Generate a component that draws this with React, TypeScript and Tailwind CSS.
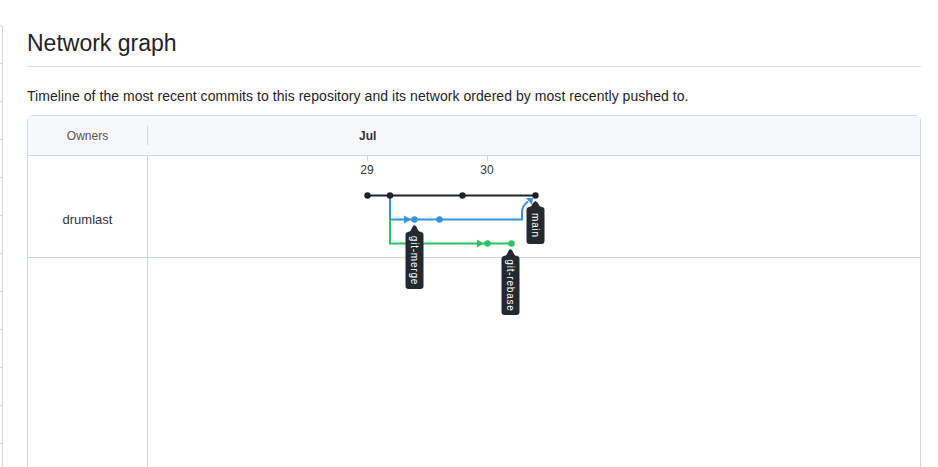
const SANS = { fontFamily: '"Liberation Sans", Arial, sans-serif' };

const SIDEBAR_ROWS = Array.from({ length: 12 });

function Label({ cx, tip, top, bottom, text }: { cx: number; tip: number; top: number; bottom: number; text: string }) {
  const l = cx - 9;
  const r = cx + 9;
  const d = `M${cx} ${tip} Q${cx + 2} ${tip + 1} ${cx + 3} ${top - 3} Q${cx + 4} ${top} ${cx + 7} ${top} H${r - 3} Q${r} ${top} ${r} ${top + 3} V${bottom - 3} Q${r} ${bottom} ${r - 3} ${bottom} H${l + 3} Q${l} ${bottom} ${l} ${bottom - 3} V${top + 3} Q${l} ${top} ${l + 3} ${top} H${cx - 7} Q${cx - 4} ${top} ${cx - 3} ${top - 3} Q${cx - 2} ${tip + 1} ${cx} ${tip} Z`;
  return (
    <g>
      <path d={d} fill="#24292f" />
      <text
        x={0}
        y={0}
        transform={`translate(${cx} ${(top + bottom) / 2}) rotate(90)`}
        textAnchor="middle"
        dominantBaseline="central"
        fill="#ffffff"
        fontSize="10"
        letterSpacing="0.8"
        fontFamily='"Liberation Sans", Arial, sans-serif'
      >
        {text}
      </text>
    </g>
  );
}

function Graph() {
  const black = '#1f2328';
  const blue = '#3b92d9';
  const green = '#2fc263';
  return (
    <svg
      className="absolute left-0 top-0"
      width={773}
      height={311}
      viewBox="148 156 773 311"
    >
      {/* day ticks */}
      <line x1={367.5} y1={156} x2={367.5} y2={161} stroke="#d0d7de" />
      <line x1={487.5} y1={156} x2={487.5} y2={161} stroke="#d0d7de" />
      <text x={367} y={174} textAnchor="middle" fontSize="12" fill="#333" fontFamily='"Liberation Sans", Arial, sans-serif'>29</text>
      <text x={487} y={174} textAnchor="middle" fontSize="12" fill="#333" fontFamily='"Liberation Sans", Arial, sans-serif'>30</text>

      {/* branches */}
      <path d="M390 195.5 V219.5 H522 V212 Q522 206 528 201.5" fill="none" stroke={blue} strokeWidth={2} />
      <path d="M526 198 L533 198 L532 205 Z" fill={blue} />
      <path d="M390 219.5 V243.5 H511" fill="none" stroke={green} strokeWidth={2} />
      <line x1={367} y1={195.5} x2={535} y2={195.5} stroke={black} strokeWidth={2} />

      {/* arrows */}
      <path d="M404 215.5 L411 219.5 L404 223.5 Z" fill={blue} />
      <path d="M477 239.5 L484 243.5 L477 247.5 Z" fill={green} />

      {/* commits */}
      {[367.5, 390, 462.5, 535.5].map((x) => (
        <circle key={x} cx={x} cy={195.5} r={3.2} fill={black} />
      ))}
      {[414.5, 439.5].map((x) => (
        <circle key={x} cx={x} cy={219.5} r={3.2} fill={blue} />
      ))}
      {[487.5, 511.5].map((x) => (
        <circle key={x} cx={x} cy={243.5} r={3.2} fill={green} />
      ))}

      <Label cx={414.5} tip={225} top={232} bottom={289} text="git-merge" />
      <Label cx={510.5} tip={249} top={256} bottom={315} text="git-rebase" />
      <Label cx={535.5} tip={201} top={207} bottom={244} text="main" />
    </svg>
  );
}

export default function App() {
  return (
    <div className="flex h-[467px] w-[938px] overflow-hidden bg-white text-[#1f2328]">
      <div className="mt-[25px] w-[3px] shrink-0 rounded-tr-md border-r border-t border-[#d0d7de]">
        {SIDEBAR_ROWS.map((_, i) => (
          <div key={i} className="h-[38px] border-b border-[#d0d7de]" />
        ))}
      </div>

      <div className="ml-[24px] w-[894px] shrink-0">
        <h2 className="mt-[28px] border-b border-[#d8dee4] pb-[8px] text-[23px] leading-[30px]" style={SANS}>
          Network graph
        </h2>
        <p className="mt-[19px] text-[14px] leading-[20px] tracking-[0.05px]" style={SANS}>
          Timeline of the most recent commits to this repository and its network ordered by most recently pushed to.
        </p>

        <div className="mt-[9px] h-[400px] rounded-t-md border border-[#d0d7de]">
          <div className="flex h-[40px] border-b border-[#d0d7de] bg-[#f6f8fa]" style={SANS}>
            <div className="my-[10px] flex w-[120px] items-center justify-center border-r border-[#d0d7de] text-[12px] text-[#555]">
              Owners
            </div>
            <div className="flex items-center pl-[211px] text-[12px] font-bold text-[#333]">Jul</div>
          </div>

          <div className="flex h-full" style={SANS}>
            <div className="w-[120px] shrink-0 border-r border-[#d0d7de]">
              <div className="h-[102px] border-b border-[#d0d7de] pt-[55px] text-center text-[13px] leading-[18px] text-[#333]">
                drumlast
              </div>
            </div>
            <div className="relative flex-1">
              <div className="h-[102px] border-b border-[#d0d7de]" />
              <Graph />
            </div>
          </div>
        </div>
      </div>
    </div>
  );
}
